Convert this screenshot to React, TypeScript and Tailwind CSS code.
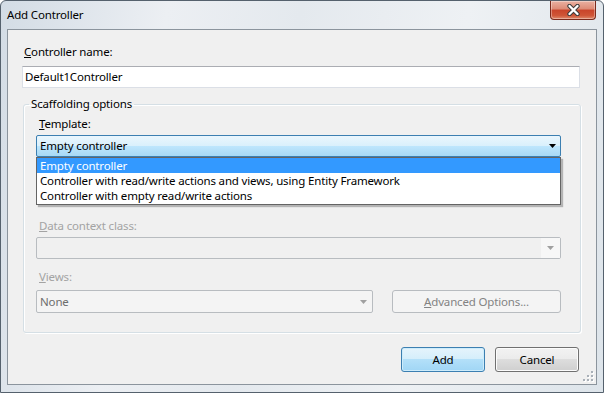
import React from "react";

function Arrow({ color = "#000" }: { color?: string }) {
  return (
    <svg width="7" height="4" viewBox="0 0 7 4" className="shrink-0">
      <path d="M0 0h7L3.5 4z" fill={color} />
    </svg>
  );
}

function CloseButton() {
  return (
    <div className="mr-[7px] flex h-[19px] w-[46px] items-center justify-center rounded-b-[4px] border border-t-0 border-[#7a2a1c] bg-[linear-gradient(180deg,#eab1a2_0%,#dd8a75_45%,#c9442a_50%,#cf5537_80%,#df8a6c_100%)] shadow-[inset_0_0_0_1px_rgba(255,255,255,0.35)]">
      <svg width="15" height="12" viewBox="0 0 15 12">
        <path d="M3.5 2l8 8M11.5 2l-8 8" stroke="#3b3b3b" strokeWidth="4.4" strokeLinecap="round" />
        <path d="M3.5 2l8 8M11.5 2l-8 8" stroke="#ffffff" strokeWidth="2.4" strokeLinecap="round" />
      </svg>
    </div>
  );
}

function SizeGrip() {
  const dots = [
    [8, 0],
    [4, 4],
    [8, 4],
    [0, 8],
    [4, 8],
    [8, 8],
  ];
  return (
    <svg width="11" height="11" viewBox="0 0 11 11" className="absolute bottom-[2px] right-[2px]">
      {dots.map(([x, y], i) => (
        <g key={i}>
          <rect x={x + 1} y={y + 1} width="2" height="2" fill="#ffffff" />
          <rect x={x} y={y} width="2" height="2" fill="#a9b0b8" />
        </g>
      ))}
    </svg>
  );
}

const items = [
  "Empty controller",
  "Controller with read/write actions and views, using Entity Framework",
  "Controller with empty read/write actions",
];

export default function App() {
  return (
    <div className="flex h-[393px] w-[604px] flex-col overflow-hidden rounded-t-[6px] border border-[#55616d] bg-[linear-gradient(100deg,#d3dce5_0%,#eceff3_25%,#e4e9ee_45%,#eef1f4_70%,#dde4ea_100%)] font-['Noto_Sans',sans-serif] text-[11.5px] tracking-[-0.16px] text-black">
      <div className="flex h-[28px] shrink-0 items-start justify-between">
        <div className="pl-[6px] pt-[6px] leading-[16px]">Add Controller</div>
        <CloseButton />
      </div>

      <div className="relative mx-[6px] mb-[7px] flex flex-1 flex-col border border-[#8b949d] bg-[#f0f0f0] pr-[17px]">
        <div className="pl-[16px] pt-[14px] leading-[16px]">
          <span className="underline">C</span>ontroller name:
        </div>
        <div className="ml-[14px] mt-[6px] flex h-[22px] w-[558px] items-center border border-[#dbdfe6] border-t-[#abadb3] bg-white pl-[2px]">
          Default1Controller
        </div>

        <fieldset className="ml-[15px] mt-[8px] w-[558px] rounded-[3px] border border-[#d5dfe5] pb-[19px] shadow-[inset_1px_1px_0_#ffffff,1px_1px_0_#ffffff]">
          <legend className="ml-[5px] px-[2px] leading-[16px]">Scaffolding options</legend>

          <div className="pl-[12px] pt-[4px]">
            <div className="pl-[3px] leading-[16px]">
              <span className="underline">T</span>emplate:
            </div>
            <div className="relative mt-[3px] w-[525px]">
              <div className="flex h-[22px] items-center justify-between rounded-[2px] border border-[#3c7fb1] bg-[linear-gradient(180deg,#eaf6fd_0%,#d9f0fc_50%,#bee6fd_50%,#a7d9f5_100%)] pl-[3px] pr-[4px]">
                <span>Empty controller</span>
                <Arrow />
              </div>
              <div className="absolute left-0 top-full z-10 w-full border border-[#646464] bg-white pb-[1px] shadow-[2px_2px_1px_rgba(0,0,0,0.25)]">
                {items.map((it, i) => (
                  <div
                    key={it}
                    className={
                      i === 0
                        ? "h-[15px] bg-[#3399ff] pl-[3px] leading-[15px] text-white"
                        : "h-[15px] pl-[3px] leading-[15px] text-black"
                    }
                  >
                    {it}
                  </div>
                ))}
              </div>
            </div>

            <div className="mt-[61px] pl-[3px] leading-[16px] text-[#a3a3a3]">
              <span className="underline">D</span>ata context class:
            </div>
            <div className="mt-[3px] flex h-[22px] w-[525px] rounded-[2px] border border-[#b8bcc0] bg-[#f0f0f0]">
              <div className="flex-1" />
              <div className="flex w-[19px] items-center justify-center bg-[#f7f7f7]">
                <Arrow color="#a0a0a0" />
              </div>
            </div>

            <div className="mt-[10px] pl-[3px] leading-[16px] text-[#a3a3a3]">
              <span className="underline">V</span>iews:
            </div>
            <div className="mt-[5px] flex gap-[19px]">
              <div className="flex h-[23px] w-[337px] items-center justify-between rounded-[2px] border border-[#b8bcc0] bg-[#f4f4f4] pl-[3px] pr-[5px] text-[#6d6d6d]">
                <span>None</span>
                <Arrow color="#a0a0a0" />
              </div>
              <div className="flex h-[23px] w-[169px] items-center justify-center rounded-[3px] border border-[#b8bcc0] bg-[#f4f4f4] text-[#838383]">
                <span>
                  <span className="underline">A</span>dvanced Options...
                </span>
              </div>
            </div>
          </div>
        </fieldset>

        <div className="mt-[14px] flex justify-end gap-[10px]">
          <div className="flex h-[25px] w-[84px] items-center justify-center rounded-[3px] border border-[#3c7fb1] bg-[linear-gradient(180deg,#e5f4fc_0%,#d4eefb_50%,#b3e0f9_50%,#a0d6f5_100%)] shadow-[inset_0_0_0_1px_#cdecfb]">
            Add
          </div>
          <div className="flex h-[25px] w-[84px] items-center justify-center rounded-[3px] border border-[#707070] bg-[linear-gradient(180deg,#f2f2f2_0%,#ebebeb_50%,#dddddd_50%,#cfcfcf_100%)] shadow-[inset_0_0_0_1px_#fcfcfc]">
            Cancel
          </div>
        </div>

        <SizeGrip />
      </div>
    </div>
  );
}
